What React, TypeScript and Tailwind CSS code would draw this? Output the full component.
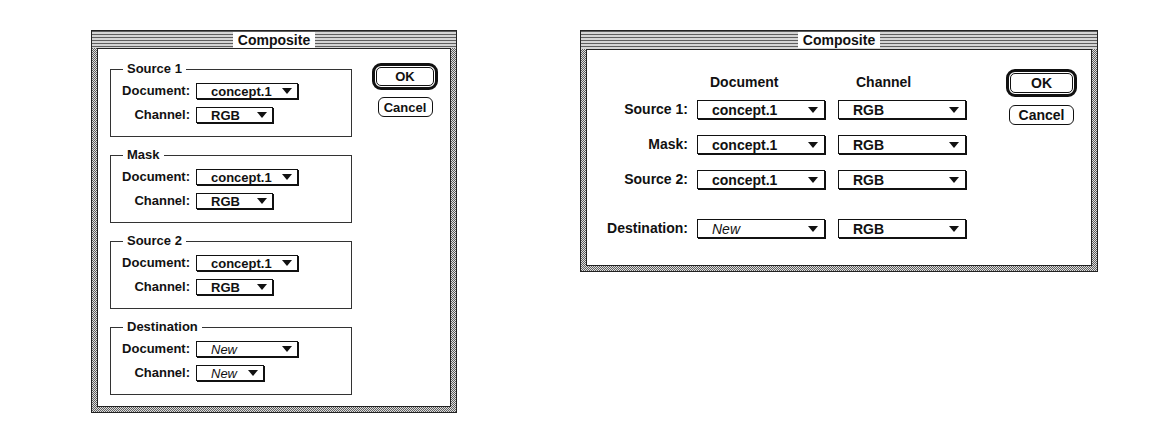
import React from 'react';

const Triangle = () => (
  <svg width="10" height="6" viewBox="0 0 10 6" className="shrink-0">
    <polygon points="0,0 10,0 5,6" fill="#111" />
  </svg>
);

function TitleBar({ h }: { h: string }) {
  return (
    <div className={`${h} flex items-center justify-center bg-[repeating-linear-gradient(to_bottom,#5e5e5e_0px,#5e5e5e_1px,#d4d4d4_1px,#d4d4d4_3px)]`}>
      <span className="bg-white px-[5px] text-[14px] font-bold leading-[16px] text-[#111]">Composite</span>
    </div>
  );
}

function Popup({ value, width, italic }: { value: string; width: string; italic?: boolean }) {
  return (
    <div className={`${width} h-[16px] border border-[#111] bg-white shadow-[1px_1px_0_#111] flex items-center justify-between pl-[14px] pr-[5px]`}>
      <span className={italic ? 'italic font-medium text-[13px] leading-none' : 'text-[13px] leading-none'}>{value}</span>
      <Triangle />
    </div>
  );
}

function GroupBox({ title, doc, channel, docItalic, chanItalic, chanWidth }: { title: string; doc: string; channel: string; docItalic?: boolean; chanItalic?: boolean; chanWidth: string }) {
  return (
    <div className="relative w-[242px] h-[68px] border border-[#333]">
      <span className="absolute -top-[9px] left-[12px] bg-white px-[4px] leading-[16px]">{title}</span>
      <div className="grid grid-cols-[68px_auto] items-center gap-x-[6px] gap-y-[8px] pl-[11px] pt-[13px] leading-[16px]">
        <span className="text-right">Document:</span>
        <Popup value={doc} width="w-[102px]" italic={docItalic} />
        <span className="text-right">Channel:</span>
        <Popup value={channel} width={chanWidth} italic={chanItalic} />
      </div>
    </div>
  );
}

function OkButton({ w, h }: { w: string; h: string }) {
  return (
    <div className={`${w} ${h} rounded-[9px] border-[3px] border-[#111] p-[1px]`}>
      <div className="h-full rounded-[5px] border border-[#111] flex items-center justify-center leading-none">OK</div>
    </div>
  );
}

function CancelButton({ w }: { w: string }) {
  return (
    <div className={`${w} h-[20px] rounded-[6px] border border-[#111] flex items-center justify-center leading-none`}>Cancel</div>
  );
}

function BigPopup({ value, italic }: { value: string; italic?: boolean }) {
  return (
    <div className="w-[128px] h-[19px] border border-[#111] bg-white shadow-[1px_1px_0_#111] flex items-center justify-between pl-[14px] pr-[6px]">
      <span className={italic ? 'italic font-medium leading-none' : 'leading-none'}>{value}</span>
      <Triangle />
    </div>
  );
}

function Row({ label, doc, italic, className }: { label: string; doc: string; italic?: boolean; className?: string }) {
  return (
    <div className={`flex items-center h-[19px] leading-[19px] ${className ?? ''}`}>
      <span className="w-[110px] pr-[9px] text-right">{label}</span>
      <div className="w-[141px]">
        <BigPopup value={doc} italic={italic} />
      </div>
      <BigPopup value="RGB" />
    </div>
  );
}

export default function App() {
  return (
    <div className="w-[1174px] h-[445px] bg-white flex items-start pt-[30px] pl-[91px] gap-[123px] font-['Liberation_Sans',Arial,sans-serif] font-bold text-[#111]">
      {/* vertical layout dialog */}
      <div className="w-[366px] h-[383px] flex flex-col border border-[#222] bg-[repeating-conic-gradient(#5e5e5e_0%_25%,#dedede_0%_50%)] bg-[length:2px_2px]">
        <TitleBar h="h-[17px]" />
        <div className="flex-1 mx-[5px] mb-[5px] border border-[#222] bg-white flex pl-[12px] pt-[14px] text-[13px]">
          <div className="flex flex-col gap-[18px] mt-[6px]">
            <GroupBox title="Source 1" doc="concept.1" channel="RGB" chanWidth="w-[77px]" />
            <GroupBox title="Mask" doc="concept.1" channel="RGB" chanWidth="w-[77px]" />
            <GroupBox title="Source 2" doc="concept.1" channel="RGB" chanWidth="w-[77px]" />
            <GroupBox title="Destination" doc="New" docItalic channel="New" chanItalic chanWidth="w-[68px]" />
          </div>
          <div className="ml-[20px] flex flex-col items-center gap-[7px]">
            <OkButton w="w-[66px]" h="h-[27px]" />
            <CancelButton w="w-[55px]" />
          </div>
        </div>
      </div>

      {/* table layout dialog */}
      <div className="w-[518px] h-[242px] flex flex-col border border-[#222] bg-[repeating-conic-gradient(#5e5e5e_0%_25%,#dedede_0%_50%)] bg-[length:2px_2px]">
        <TitleBar h="h-[18px]" />
        <div className="flex-1 mx-[5px] mb-[5px] border border-[#222] bg-white flex text-[14px]">
          <div className="flex flex-col pt-[23px]">
            <div className="flex items-center h-[18px] leading-[18px]">
              <span className="ml-[123px] w-[141px]">Document</span>
              <span className="ml-[5px]">Channel</span>
            </div>
            <Row label="Source 1:" doc="concept.1" className="mt-[9px]" />
            <Row label="Mask:" doc="concept.1" className="mt-[16px]" />
            <Row label="Source 2:" doc="concept.1" className="mt-[16px]" />
            <Row label="Destination:" doc="New" italic className="mt-[30px]" />
          </div>
          <div className="ml-[40px] pt-[19px] flex flex-col items-center gap-[8px]">
            <OkButton w="w-[71px]" h="h-[28px]" />
            <CancelButton w="w-[65px]" />
          </div>
        </div>
      </div>
    </div>
  );
}
